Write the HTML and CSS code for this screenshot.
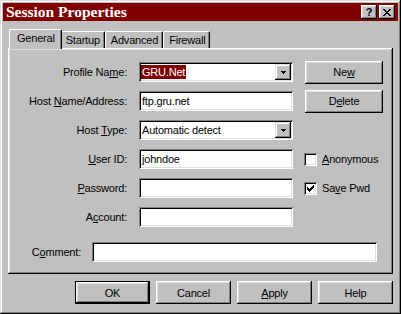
FILE: index.html
```html
<!DOCTYPE html>
<html lang="en">
<head>
    <meta charset="UTF-8">
    <title>Session Properties</title>
    <link rel="stylesheet" href="styles.css">
</head>
<body>
    <div class="window">
        <div class="titlebar">
            <span class="title">Session Properties</span>
            <div class="caption-buttons">
                <span class="caption-btn help">?</span>
                <span class="caption-btn close">
                    <svg width="8" height="7" viewBox="0 0 8 7" shape-rendering="crispEdges">
                        <path d="M0 0h2v1h1v1h2v-1h1v-1h2v1h-1v1h-1v1h-1v1h1v1h1v1h1v1h-2v-1h-1v-1h-2v1h-1v1h-2v-1h1v-1h1v-1h1v-1h-1v-1h-1v-1h-1z" fill="#000"/>
                    </svg>
                </span>
            </div>
        </div>

        <div class="dialog">
            <div class="tabs">
                <div class="tab active">General</div>
                <div class="tab">Startup</div>
                <div class="tab">Advanced</div>
                <div class="tab">Firewall</div>
            </div>

            <div class="panel">
                <div class="form-grid">
                    <label class="field-label">Profile Na<u>m</u>e:</label>
                    <div class="field combo">
                        <span class="value"><span class="selected">GRU.Net</span></span>
                        <span class="drop-btn"><svg width="5" height="3" viewBox="0 0 5 3" shape-rendering="crispEdges"><path d="M0 0h5v1h-1v1h-1v1h-1v-1h-1v-1h-1z" fill="#000"/></svg></span>
                    </div>
                    <button class="btn side-btn">Ne<u>w</u></button>

                    <label class="field-label">Host <u>N</u>ame/Address:</label>
                    <div class="field"><span class="value">ftp.gru.net</span></div>
                    <button class="btn side-btn">D<u>e</u>lete</button>

                    <label class="field-label">Host <u>T</u>ype:</label>
                    <div class="field combo">
                        <span class="value">Automatic detect</span>
                        <span class="drop-btn"><svg width="5" height="3" viewBox="0 0 5 3" shape-rendering="crispEdges"><path d="M0 0h5v1h-1v1h-1v1h-1v-1h-1v-1h-1z" fill="#000"/></svg></span>
                    </div>
                    <div></div>

                    <label class="field-label"><u>U</u>ser ID:</label>
                    <div class="field"><span class="value">johndoe</span></div>
                    <div class="check-row">
                        <span class="checkbox"></span>
                        <span><u>A</u>nonymous</span>
                    </div>

                    <label class="field-label"><u>P</u>assword:</label>
                    <div class="field"></div>
                    <div class="check-row">
                        <span class="checkbox">
                            <svg width="7" height="7" viewBox="0 0 7 7" shape-rendering="crispEdges"><path d="M6 0h1v3h-1v1h-1v1h-1v1h-1v1h-1v-1h-1v-1h-1v-3h1v1h1v1h1v-1h1v-1h1v-1h1z" fill="#000"/></svg>
                        </span>
                        <span>Sa<u>v</u>e Pwd</span>
                    </div>

                    <label class="field-label">A<u>c</u>count:</label>
                    <div class="field"></div>
                    <div></div>
                </div>

                <div class="comment-row">
                    <label class="field-label">C<u>o</u>mment:</label>
                    <div class="field"></div>
                </div>
            </div>

            <div class="actions">
                <button class="btn default">OK</button>
                <button class="btn">Cancel</button>
                <button class="btn"><u>A</u>pply</button>
                <button class="btn">Help</button>
            </div>
        </div>
    </div>
</body>
</html>
```

FILE: styles.css
```css
body {
    margin: 0;
    background: #c0c0c0;
    font-family: "Liberation Sans", Arial, sans-serif;
    font-size: 11px;
    letter-spacing: -0.2px;
    color: #000;
}
.window {
    width: 401px;
    height: 314px;
    box-sizing: border-box;
    padding: 3px;
    background: #c0c0c0;
    box-shadow: inset -1px -1px #000, inset 1px 1px #dfdfdf, inset -2px -2px #808080, inset 2px 2px #fff;
}
.titlebar {
    height: 18px;
    background: #800000;
    display: flex;
    align-items: center;
    justify-content: space-between;
    padding: 0 3px 0 3px;
}
.title {
    font-family: "Liberation Serif", "Times New Roman", serif;
    font-weight: bold;
    font-size: 15.5px;
    letter-spacing: 0;
    color: #fff;
    line-height: 18px;
}
.caption-buttons {
    display: flex;
    gap: 2px;
}
.caption-btn {
    width: 16px;
    height: 14px;
    box-sizing: border-box;
    background: #c0c0c0;
    box-shadow: inset -1px -1px #000, inset 1px 1px #fff, inset -2px -2px #808080, inset 2px 2px #dfdfdf;
    display: flex;
    align-items: center;
    justify-content: center;
}
.caption-btn.help {
    font-weight: bold;
    font-size: 11px;
    line-height: 14px;
}
.dialog {
    padding: 8px 5px 0 5px;
}
.tabs {
    display: flex;
    align-items: flex-end;
    height: 19px;
    padding-left: 3px;
}
.tab {
    height: 17px;
    box-sizing: border-box;
    padding: 0 4px 0 5px;
    line-height: 16px;
    background: #c0c0c0;
    border-top: 1px solid #fff;
    border-left: 1px solid #fff;
    border-right: 1px solid #000;
    border-radius: 2px 2px 0 0;
    box-shadow: inset -1px 0 #808080;
}
.tab.active {
    position: relative;
    z-index: 1;
    height: 20px;
    margin: 0 -2px -1px -2px;
    padding: 0 6px 2px 7px;
    line-height: 17px;
}
.tab.active + .tab {
    border-left: none;
    padding-left: 6px;
}
.panel {
    height: 226px;
    box-sizing: border-box;
    padding: 14px 0 12px 10px;
    box-shadow: inset -1px -1px #000, inset 1px 1px #fff, inset -2px -2px #808080, inset 2px 2px #dfdfdf;
}
.form-grid {
    display: grid;
    grid-template-columns: 109px 154px 78px;
    grid-auto-rows: 20px;
    column-gap: 12px;
    row-gap: 9px;
    align-items: center;
}
.field-label {
    text-align: right;
}
.field {
    height: 20px;
    box-sizing: border-box;
    background: #fff;
    padding: 0 3px;
    display: flex;
    align-items: center;
    box-shadow: inset 1px 1px #808080, inset -1px -1px #fff, inset 2px 2px #000, inset -2px -2px #dfdfdf;
}
.value {
    flex: 1;
    white-space: nowrap;
}
.combo {
    padding-right: 2px;
}
.selected {
    background: #800000;
    color: #fff;
    padding: 1px 1px;
    margin-left: -1px;
}
.drop-btn {
    width: 16px;
    height: 16px;
    box-sizing: border-box;
    background: #c0c0c0;
    box-shadow: inset -1px -1px #000, inset 1px 1px #dfdfdf, inset -2px -2px #808080, inset 2px 2px #fff;
    display: flex;
    align-items: center;
    justify-content: center;
}
.btn {
    width: 75px;
    height: 23px;
    padding: 0;
    border: none;
    background: #c0c0c0;
    font-family: inherit;
    font-size: 11px;
    letter-spacing: inherit;
    color: #000;
    box-shadow: inset -1px -1px #000, inset 1px 1px #fff, inset -2px -2px #808080, inset 2px 2px #dfdfdf;
}
.side-btn {
    width: 78px;
}
.btn.default {
    box-shadow: inset 0 0 0 1px #000, inset -2px -2px #000, inset 2px 2px #fff, inset -3px -3px #808080, inset 3px 3px #dfdfdf;
}
.check-row {
    display: flex;
    align-items: center;
    gap: 5px;
    margin-left: -1px;
}
.checkbox {
    width: 13px;
    height: 13px;
    box-sizing: border-box;
    background: #fff;
    box-shadow: inset 1px 1px #808080, inset -1px -1px #fff, inset 2px 2px #000, inset -2px -2px #dfdfdf;
    display: flex;
    align-items: center;
    justify-content: center;
}
.comment-row {
    display: grid;
    grid-template-columns: 63px 285px;
    column-gap: 11px;
    align-items: center;
    margin-top: 15px;
}
.actions {
    display: flex;
    justify-content: flex-end;
    gap: 6px;
    margin-top: 7px;
}
```
